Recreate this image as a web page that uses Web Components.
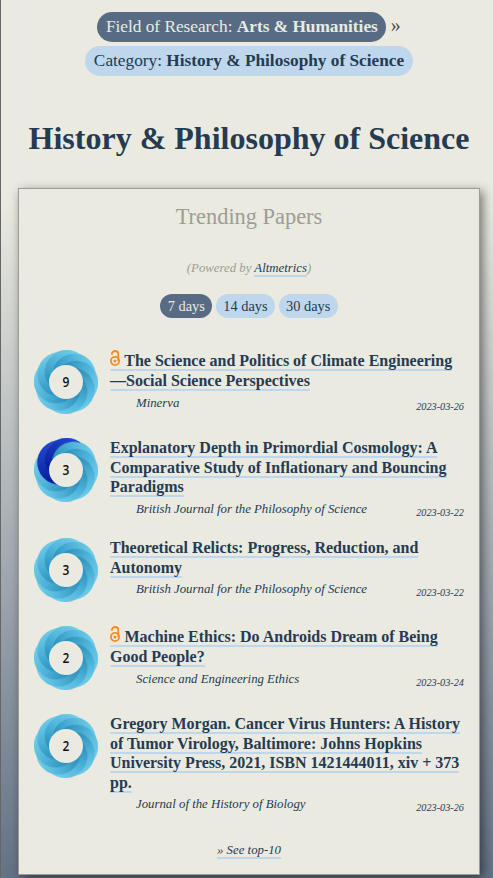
<!DOCTYPE html>
<html lang="en">
<head>
<meta charset="utf-8">
<title>History &amp; Philosophy of Science</title>
<style>
	html {
		background: #666;
	}
	body {
		margin: 0;
		color: #253b52;
		font-family: "Liberation Serif", "Times New Roman", serif;
		font-size: 16px;
		overflow: hidden;
	}
	h1 {
		margin: 41px 0 31px;
		font-size: 32px;
		line-height: 38px;
		text-align: center;
	}
	.arrow {
		font-size: 20px;
		line-height: 0;
		color: #4a4a4a;
	}
</style>
</head>
<body>
<category-page>
	<div slot="path">
		<tag-pill active>Field of Research: <b>Arts &amp; Humanities</b></tag-pill> <span class="arrow">»</span><br>
		<tag-pill>Category: <b>History &amp; Philosophy of Science</b></tag-pill>
	</div>
	<h1>History &amp; Philosophy of Science</h1>
	<trending-box heading="Trending Papers">
		<span slot="source">(Powered by <under-link>Altmetrics</under-link>)</span>
		<tag-pill slot="range" active>7 days</tag-pill>
		<tag-pill slot="range">14 days</tag-pill>
		<tag-pill slot="range">30 days</tag-pill>
		<paper-item score="9" journal="Minerva" date="2023-03-26" open-access>The Science and Politics of Climate Engineering<wbr>—Social Science Perspectives</paper-item>
		<paper-item score="3" journal="British Journal for the Philosophy of Science" date="2023-03-22" blog>Explanatory Depth in Primordial Cosmology: A Comparative Study of Inflationary and Bouncing Paradigms</paper-item>
		<paper-item score="3" journal="British Journal for the Philosophy of Science" date="2023-03-22">Theoretical Relicts: Progress, Reduction, and Autonomy</paper-item>
		<paper-item score="2" journal="Science and Engineering Ethics" date="2023-03-24" open-access>Machine Ethics: Do Androids Dream of Being Good People?</paper-item>
		<paper-item score="2" journal="Journal of the History of Biology" date="2023-03-26">Gregory Morgan. Cancer Virus Hunters: A History of Tumor Virology, Baltimore: Johns Hopkins University Press, 2021, ISBN 1421444011, xiv + 373 pp.</paper-item>
		<under-link slot="more">» See top-10</under-link>
	</trending-box>
</category-page>

<script>
"use strict";

(function() {
	function define(name, template, setup) {
		customElements.define(name, class extends HTMLElement {
			constructor() {
				super();
				this.attachShadow({mode: "open"}).innerHTML = template;
			}

			connectedCallback() {
				if (setup) {
					setup(this, this.shadowRoot);
				}
			}
		});
	}

	define('category-page', `
	<style>
		:host {
			display: block;
			box-sizing: border-box;
			height: 878px;
			margin-left: 1px;
			padding: 10px 13px 0 17px;
			background: linear-gradient(#eaeae1 0, #eaeae1 200px, #647286 878px);
		}
		.path {
			font-size: 17.28px;
			line-height: 34px;
			text-align: center;
			margin-right: -4px;
			margin-left: -4px;
		}
	</style>
	<div class="path"><slot name="path"></slot></div>
	<slot></slot>
	`);

	define('tag-pill', `
	<style>
		:host {
			display: inline-block;
			padding: .27em .5em;
			border-radius: 1em;
			background: #bed7ec;
			line-height: 1.15;
			white-space: nowrap;
		}
		:host([slot=range]) {
			padding: .25em .5em;
		}
		:host([active]) {
			background: #576c84;
			color: #eaeae1;
		}
	</style>
	<slot></slot>
	`);

	// slot stays on the same line as the style: a line break would be drawn as a space
	define('under-link', `<style>
		:host {
			display: inline;
			border-bottom: 2px solid #bed7ec;
			color: #253b52;
		}
	</style><slot></slot>`);

	define('trending-box', `
	<style>
		:host {
			display: block;
			box-sizing: border-box;
			height: 687px;
			padding: 14px 15px 0;
			border: 1px solid #9d9d94;
			background: #eaeae1;
			box-shadow: 3px 3px 10px rgba(0, 0, 0, .5);
		}
		h2 {
			margin: 0 0 27px;
			color: #9d9d94;
			font-size: 22.4px;
			font-weight: normal;
			line-height: 28px;
			text-align: center;
		}
		.source, .more {
			font-size: 12.8px;
			font-style: italic;
			line-height: 20px;
			text-align: center;
		}
		.source {
			color: #9d9d94;
			margin-bottom: 16px;
		}
		.ranges {
			display: flex;
			justify-content: center;
			gap: 4px;
			height: 24px;
			margin-bottom: 32px;
			font-size: 14.4px;
		}
		.papers {
			display: grid;
			row-gap: 24px;
		}
		.more {
			margin-top: 31px;
		}
	</style>
	<h2></h2>
	<div class="source"><slot name="source"></slot></div>
	<div class="ranges"><slot name="range"></slot></div>
	<div class="papers"><slot></slot></div>
	<div class="more"><slot name="more"></slot></div>
	`, (el, root) => {
		root.querySelector('h2').textContent = el.getAttribute('heading');
	});

	// eight crescents around a round hole, two of them dark for blog mentions
	define('score-badge', `
	<style>
		:host {
			display: block;
			width: 64px;
			height: 64px;
		}
		svg {
			display: block;
		}
		text {
			font: 600 15px "Open Sans", sans-serif;
			fill: #111;
			text-anchor: middle;
		}
	</style>
	<svg width="64" height="64" viewBox="-32 -32 64 64">
		<defs>
			<linearGradient id="light" gradientUnits="userSpaceOnUse" x1="0" y1="-31" x2="0" y2="10">
				<stop offset="0" stop-color="#6dcbea"/>
				<stop offset=".5" stop-color="#4bb0d6"/>
				<stop offset="1" stop-color="#2b8fbb"/>
			</linearGradient>
			<linearGradient id="dark" gradientUnits="userSpaceOnUse" x1="0" y1="-31" x2="0" y2="10">
				<stop offset="0" stop-color="#1f46cc"/>
				<stop offset="1" stop-color="#051c98"/>
			</linearGradient>
		</defs>
		<g class="blades"></g>
		<circle r="17" fill="#eaeae1"/>
		<text transform="translate(0 5.3) scale(.8 1)"></text>
	</svg>
	`, (el, root) => {
		const blade = 'M0 -30.9 A22 22 0 1 0 0 12.4 A22 22 0 0 1 0 -30.9 Z';
		const blog = el.hasAttribute('blog');
		let html = '';
		for (let i = 0; i < 8; i++) {
			const fill = blog && i > 5 ? 'dark' : 'light';
			html += `<path d="${blade}" fill="url(#${fill})" stroke="url(#${fill})" stroke-width=".4" transform="rotate(${i * 45 + 72})"/>`;
		}
		root.querySelector('.blades').innerHTML = html;
		root.querySelector('text').textContent = el.getAttribute('score');
	});

	define('open-lock', `
	<style>
		:host {
			display: inline-block;
			width: 10px;
			height: 16px;
			margin-right: .5px;
			vertical-align: 0;
		}
		svg {
			display: block;
		}
	</style>
	<svg width="10" height="16" viewBox="0 0 10 16" fill="none" stroke="#f68a20">
		<path d="M1.9 4.8V4a3.2 3 0 0 1 6.4 0v7" stroke-width="1.8"/>
		<circle cx="5" cy="11" r="4.1" stroke-width="1.8"/>
		<circle cx="5" cy="11" r="1.5" fill="#f68a20" stroke="none"/>
	</svg>
	`);

	define('paper-item', `
	<style>
		:host {
			display: grid;
			grid-template-columns: 64px 1fr;
			column-gap: 12px;
			min-height: 64px;
		}
		.title {
			padding-top: .45px;
			font-weight: bold;
			line-height: 19.4px;
		}
		.meta {
			display: flex;
			justify-content: space-between;
			height: 17.35px;
			padding-left: 26px;
			font-size: 12.8px;
			font-style: italic;
			line-height: 25.8px;
		}
		:host([open-access]) .meta {
			margin-top: .7px;
		}
		.date {
			font-size: 10.24px;
			line-height: 32.8px;
		}
	</style>
	<score-badge></score-badge>
	<div>
		<div class="title"><under-link><span class="lock"></span><slot></slot></under-link></div>
		<div class="meta"><span class="journal"></span><span class="date"></span></div>
	</div>
	`, (el, root) => {
		const badge = document.createElement('score-badge');
		badge.setAttribute('score', el.getAttribute('score'));
		badge.toggleAttribute('blog', el.hasAttribute('blog'));
		root.querySelector('score-badge').replaceWith(badge);
		if (el.hasAttribute('open-access')) {
			root.querySelector('.lock').innerHTML = '<open-lock></open-lock> ';
		}
		root.querySelector('.journal').textContent = el.getAttribute('journal');
		root.querySelector('.date').textContent = el.getAttribute('date');
	});
})();
</script>
</body>
</html>
